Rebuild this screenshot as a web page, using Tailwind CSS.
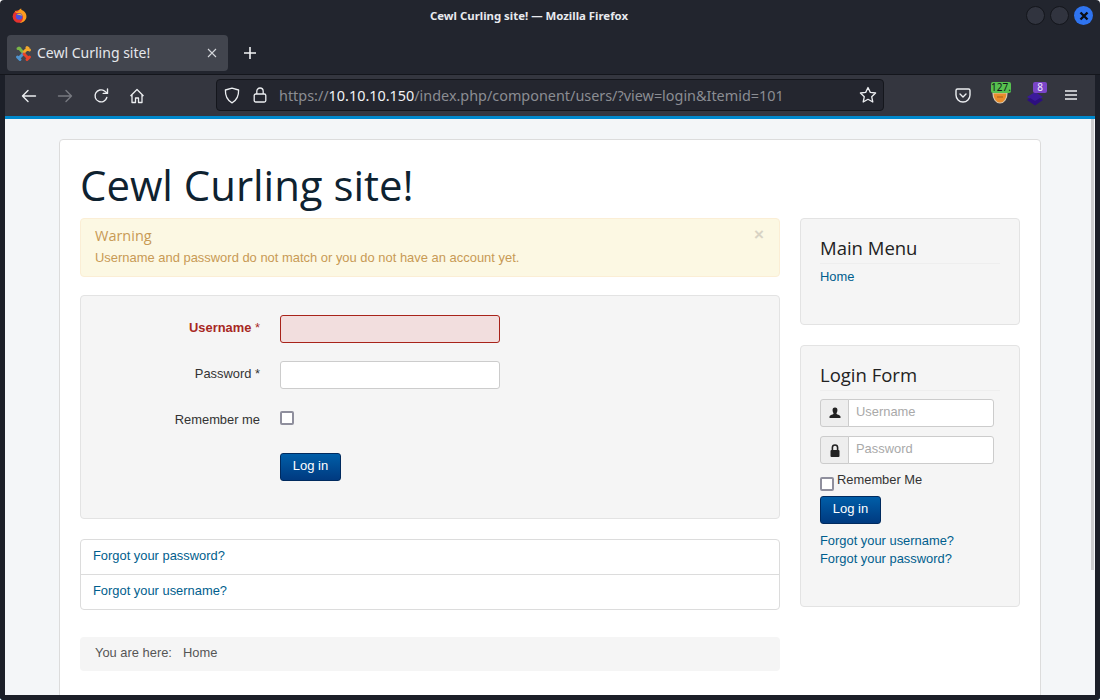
<!DOCTYPE html>
<html>
<head>
<meta charset="utf-8">
<script src="https://cdn.jsdelivr.net/npm/@tailwindcss/browser@4"></script>
</head>
<body class="m-0 overflow-hidden bg-white">
<div class="w-[1100px] h-[700px] flex flex-col bg-[#22252e] rounded-[4px] overflow-hidden font-['Noto_Sans',sans-serif]">
  <!-- title bar -->
  <div class="h-[35px] shrink-0 flex items-center relative px-[12px]">
    <svg width="15" height="15" viewBox="0 0 16 16" class="shrink-0 -mt-[4px]">
      <circle cx="7.5" cy="9" r="6.8" fill="#e5322f"/>
      <path d="M3 2.5 C4 4 5 4 6.5 3.6 C7 2 9 0.5 10 0.5 C9.5 1.5 10 2 11 2.4 C14 3.6 16 7 15.3 10.5 C14.5 14 11 16 8 15.8 C11 14.5 12.4 11.5 11.4 8.5 C10.5 6 8 5 5.5 5.5 C4 5.5 3 4 3 2.5 Z" fill="#fb9b1d"/>
      <circle cx="7.6" cy="9" r="3.5" fill="#4a50e0"/>
      <path d="M5 7 C7 5.5 10 6 11 8.5 C9 7.5 7 7.5 5 7 Z" fill="#f7c321"/>
    </svg>
    <div class="absolute left-0 right-[42px] top-[8px] text-center text-[11.4px] leading-[16px] font-bold text-[#e8eaee]">Cewl Curling site! — Mozilla Firefox</div>
    <div class="ml-auto flex items-center gap-[5px] -mr-[5px] -mt-[4px]">
      <span class="w-[19px] h-[19px] rounded-full bg-[#31343f] border border-[#14161c]"></span>
      <span class="w-[19px] h-[19px] rounded-full bg-[#31343f] border border-[#14161c]"></span>
      <span class="w-[19px] h-[19px] rounded-full bg-[#2f74f0] flex items-center justify-center">
        <svg width="10" height="10" viewBox="0 0 10 10"><path d="M1.5 1.5 L8.5 8.5 M8.5 1.5 L1.5 8.5" stroke="#0b0d14" stroke-width="2.4"/></svg>
      </span>
    </div>
  </div>
  <!-- tab bar -->
  <div class="h-[40px] shrink-0 flex items-start pl-[7px] border-b border-[#14161c]">
    <div class="w-[221px] h-[36px] rounded-[4px] bg-[#42454e] flex items-center pl-[8px] pr-[11px]">
      <svg width="17" height="17" viewBox="0 0 17 17" class="shrink-0" fill="none" stroke-width="3" stroke-linecap="round">
        <path d="M4 3 L9 8.5 M3 3.5 H5" stroke="#7ab648"/>
        <path d="M13 3 L9 7 M12 2.5 L14.5 5" stroke="#f4a82c"/>
        <path d="M4 13 L8 9 M2.5 12 L5 14.5" stroke="#4f93ce"/>
        <path d="M13 13 L9 9 M14.5 12 L12 14.5" stroke="#e8432a"/>
      </svg>
      <span class="ml-[5px] text-[14px] text-[#e6e8ec] leading-[20px]">Cewl Curling site!</span>
      <svg width="10" height="10" viewBox="0 0 10 10" class="ml-auto"><path d="M1 1 L9 9 M9 1 L1 9" stroke="#d4d6da" stroke-width="1.1"/></svg>
    </div>
    <svg width="14" height="14" viewBox="0 0 14 14" class="ml-[15px] mt-[11px]"><path d="M7 1 V13 M1 7 H13" stroke="#f2f3f5" stroke-width="1.6"/></svg>
  </div>
  <!-- nav bar -->
  <div class="h-[41px] shrink-0 border-x-[5px] border-[#1c1f28] bg-[#34363f] flex items-center relative">
    <div class="pl-[16px] flex items-center gap-[20px] shrink-0">
      <svg width="16" height="16" viewBox="0 0 16 16" fill="none" stroke="#eceef1" stroke-width="1.4" stroke-linecap="round" stroke-linejoin="round"><path d="M14.5 8 H1.5 M7 2.5 L1.5 8 L7 13.5"/></svg>
      <svg width="16" height="16" viewBox="0 0 16 16" fill="none" stroke="#777980" stroke-width="1.4" stroke-linecap="round" stroke-linejoin="round"><path d="M1.5 8 H14.5 M9 2.5 L14.5 8 L9 13.5"/></svg>
      <svg width="16" height="16" viewBox="0 0 16 16" fill="none" stroke="#eceef1" stroke-width="1.4" stroke-linecap="round" stroke-linejoin="round"><path d="M13.8 9.5 A6 6 0 1 1 11.5 3 L14 5"/><path d="M14.5 1 V5.4 H10.2"/></svg>
      <svg width="16" height="16" viewBox="0 0 16 16" fill="none" stroke="#eceef1" stroke-width="1.3" stroke-linejoin="round"><path d="M1.5 8 L8 1.5 L14.5 8 M3 7 V14.5 H6.5 V10 H9.5 V14.5 H13 V7"/></svg>
    </div>
    <div class="absolute left-[211px] top-[4px] w-[668px] h-[32px] rounded-[4px] bg-[#24262f] border border-[#14161c] flex items-center">
      <svg width="16" height="17" viewBox="0 0 16 17" class="ml-[7px] shrink-0" fill="none" stroke="#eceef1" stroke-width="1.3" stroke-linejoin="round"><path d="M8 1.2 L14.6 3 C14.8 9.5 12.5 13.5 8 15.8 C3.5 13.5 1.2 9.5 1.4 3 Z"/></svg>
      <svg width="14" height="16" viewBox="0 0 14 16" class="ml-[13px] shrink-0" fill="none" stroke="#eceef1" stroke-width="1.3"><rect x="1.2" y="7" width="11.6" height="8" rx="1.5"/><path d="M3.8 7 V4.2 A3.2 3.2 0 0 1 10.2 4.2 V7"/></svg>
      <span class="ml-[12px] mt-[2px] text-[14.4px] leading-[20px] whitespace-nowrap text-[#8b8d93]">https://<span class="text-[#f2f3f5]">10.10.10.150</span>/index.php/component/users/?view=login&amp;Itemid=101</span>
      <svg width="18" height="18" viewBox="0 0 18 18" class="ml-auto mr-[6px] shrink-0" fill="none" stroke="#eceef1" stroke-width="1.3" stroke-linejoin="round"><path d="M9 1.5 L11.3 6.4 L16.6 7 L12.7 10.7 L13.8 16 L9 13.3 L4.2 16 L5.3 10.7 L1.4 7 L6.7 6.4 Z"/></svg>
    </div>
    <svg width="16" height="15" viewBox="0 0 16 15" class="absolute left-[950px] top-[13px]" fill="none" stroke="#eceef1" stroke-width="1.4" stroke-linecap="round" stroke-linejoin="round"><path d="M2.5 1 H13.5 A1.5 1.5 0 0 1 15 2.5 V7 A7 7 0 0 1 1 7 V2.5 A1.5 1.5 0 0 1 2.5 1 Z"/><path d="M5 6 L8 9 L11 6"/></svg>
    <svg width="16" height="13" viewBox="0 0 16 13" class="absolute left-[987px] top-[16px]"><path d="M1 2 H15 C15 8 12 12 8 12 C4 12 1 8 1 2 Z" fill="#e98c2b" stroke="#d8c8ae" stroke-width="1.2"/><path d="M5 6 H11" stroke="#a85e18" stroke-width="1"/></svg>
    <div class="absolute left-[986px] top-[7px] w-[20px] h-[11px] rounded-[2px] bg-[#57c04f] text-[10px] leading-[11px] text-center text-[#10131a]">127.</div>
    <svg width="16" height="14" viewBox="0 0 16 14" class="absolute left-[1022px] top-[17px]"><path d="M8 0 L16 5 L8 10 L0 5 Z" fill="#3b1a9a"/><path d="M0 8 L8 13.5 L16 8 L13 6 L8 9 L3 6 Z" fill="#2d0f80"/></svg>
    <div class="absolute left-[1028px] top-[7px] w-[14px] h-[11px] rounded-[2px] bg-[#7a45c8] text-[10px] leading-[11px] text-center text-[#f0e8ff]">8</div>
    <svg width="14" height="12" viewBox="0 0 14 12" class="absolute left-[1059px] top-[14px]" fill="none" stroke="#eceef1" stroke-width="1.3"><path d="M1 2 H13 M1 6 H13 M1 10 H13"/></svg>
  </div>
  <!-- content -->
  <div class="flex-1 min-h-0 flex flex-col border-x-[5px] border-b-[5px] border-[#1c1f28] bg-[#0088cc] relative overflow-hidden font-['Liberation_Sans',sans-serif] text-[12.9px] text-[#333]">
    <div class="mt-[3px] flex-1 min-h-0 bg-[#f4f6f8] relative overflow-hidden">
    <div class="absolute right-[1px] top-0 w-[3px] h-[451px] bg-[#cdced0]"></div>
    <div class="mt-[20px] ml-[54px] w-[982px] rounded-[4px] border border-[#dcdcdc] bg-white p-[20px] pb-[40px]">
      <h1 class="font-['Open_Sans',sans-serif] text-[41.9px] leading-[50px] font-normal text-[#0e2230] mb-[8px]">Cewl Curling site!</h1>
      <div class="flex gap-[20px] items-start">
        <div class="w-[700px] shrink-0">
          <div class="h-[59px] rounded-[4px] border border-[#fbeed5] bg-[#fcf8e3] text-[#c89a55] pl-[14px] pt-[8px] relative mb-[18px]">
            <div class="font-['Open_Sans',sans-serif] text-[14.5px] leading-[18px]">Warning</div>
            <div class="mt-[4px] text-[12.95px] leading-[18px]">Username and password do not match or you do not have an account yet.</div>
            <span class="absolute right-[15px] top-[6px] text-[17px] leading-[20px] font-bold text-[#d8d3c4]">×</span>
          </div>
          <div class="h-[224px] rounded-[4px] border border-[#e3e3e3] bg-[#f5f5f5] pt-[19px] mb-[20px]">
            <div class="flex items-center h-[28px] mb-[18px]">
              <label class="w-[179px] text-right font-bold text-[#a8281f] -mt-[3px]">Username <span class="font-normal">*</span></label>
              <div class="ml-[20px] w-[220px] h-[28px] rounded-[3px] border border-[#a8231a] bg-[#f2dede]"></div>
            </div>
            <div class="flex items-center h-[28px] mb-[18px]">
              <label class="w-[179px] text-right -mt-[3px]">Password *</label>
              <div class="ml-[20px] w-[220px] h-[28px] rounded-[3px] border border-[#cccccc] bg-white"></div>
            </div>
            <div class="flex items-center h-[28px] mb-[20px]">
              <label class="w-[179px] text-right -mt-[3px]">Remember me</label>
              <div class="ml-[20px] -mt-[6px] w-[14px] h-[14px] rounded-[2px] border-2 border-[#8f8f9d] bg-white"></div>
            </div>
            <button class="ml-[199px] -mt-[2px] block h-[28px] w-[61px] pb-[2px] rounded-[3px] border border-[#002a5e] bg-gradient-to-b from-[#005ea8] to-[#003a80] text-white text-[13px]">Log in</button>
          </div>
          <div class="rounded-[4px] border border-[#dcdcdc] bg-white mb-[27px] text-[#005e8d]">
            <div class="h-[35px] pl-[12px] pb-[3px] flex items-center border-b border-[#dcdcdc]">Forgot your password?</div>
            <div class="h-[34px] pl-[12px] pb-[3px] flex items-center">Forgot your username?</div>
          </div>
          <div class="h-[34px] rounded-[4px] bg-[#f5f5f5] pl-[15px] pb-[3px] flex items-center text-[#555]">
            <span>You are here:</span><span class="ml-[11px]">Home</span>
          </div>
        </div>
        <div class="w-[220px] shrink-0">
          <div class="h-[107px] rounded-[4px] border border-[#e3e3e3] bg-[#f5f5f5] px-[19px] pt-[17px] mb-[20px]">
            <h3 class="font-['Open_Sans',sans-serif] text-[18.5px] leading-[24px] font-normal text-[#222] border-b border-[#eeeeee] pb-[3px] mb-[4px]">Main Menu</h3>
            <div class="text-[#005e8d] leading-[18px]">Home</div>
          </div>
          <div class="h-[262px] rounded-[4px] border border-[#e3e3e3] bg-[#f5f5f5] px-[19px] pt-[17px]">
            <h3 class="font-['Open_Sans',sans-serif] text-[18.5px] leading-[24px] font-normal text-[#222] border-b border-[#eeeeee] pb-[3px] mb-[8px]">Login Form</h3>
            <div class="flex w-[174px] h-[28px] mb-[9px]">
              <span class="w-[29px] shrink-0 rounded-l-[3px] border border-[#cccccc] bg-[#eeeeee] flex items-center justify-center">
                <svg width="12" height="12" viewBox="0 0 12 12" fill="#222"><path d="M6 0.5 C4.2 0.5 3.4 1.8 3.6 3.6 C3.7 5 4.4 6 4.6 6.6 C4.6 7.6 1 8 0.5 9.5 V11 H11.5 V9.5 C11 8 7.4 7.6 7.4 6.6 C7.6 6 8.3 5 8.4 3.6 C8.6 1.8 7.8 0.5 6 0.5 Z"/></svg>
              </span>
              <span class="flex-1 -ml-[1px] rounded-r-[3px] border border-[#cccccc] bg-white pl-[7px] text-[#a9a9a9] leading-[24px]">Username</span>
            </div>
            <div class="flex w-[174px] h-[28px] mb-[11px]">
              <span class="w-[29px] shrink-0 rounded-l-[3px] border border-[#cccccc] bg-[#eeeeee] flex items-center justify-center">
                <svg width="10" height="13" viewBox="0 0 10 13" fill="#222"><path d="M1.6 6 V3.6 A3.4 3.4 0 0 1 8.4 3.6 V6 H6.8 V3.6 A1.8 1.8 0 0 0 3.2 3.6 V6 Z"/><rect x="0.5" y="6" width="9" height="7" rx="1"/></svg>
              </span>
              <span class="flex-1 -ml-[1px] rounded-r-[3px] border border-[#cccccc] bg-white pl-[7px] text-[#a9a9a9] leading-[24px]">Password</span>
            </div>
            <div class="flex items-start h-[21px]">
              <span class="mt-[2px] w-[14px] h-[14px] rounded-[2px] border-2 border-[#8f8f9d] bg-white shrink-0"></span>
              <span class="ml-[3px] leading-[18px] -mt-[4px]">Remember Me</span>
            </div>
            <button class="block h-[28px] w-[61px] pb-[2px] rounded-[3px] border border-[#002a5e] bg-gradient-to-b from-[#005ea8] to-[#003a80] text-white text-[13px] mb-[8px]">Log in</button>
            <div class="text-[#005e8d] leading-[18px]">Forgot your username?</div>
            <div class="text-[#005e8d] leading-[18px]">Forgot your password?</div>
          </div>
        </div>
      </div>
    </div>
    </div>
  </div>
</div>
</body>
</html>
